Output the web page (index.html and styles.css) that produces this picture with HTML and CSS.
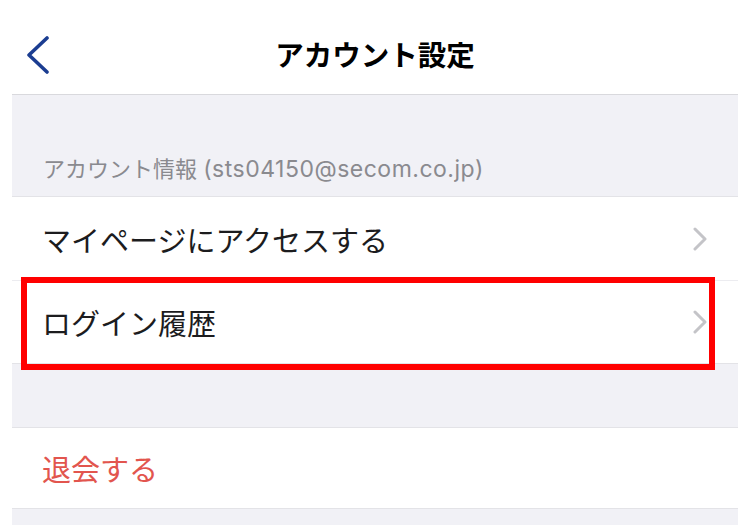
FILE: index.html
```html
<!DOCTYPE html>
<html lang="ja">
<head>
    <meta charset="UTF-8">
    <meta name="viewport" content="width=device-width, initial-scale=1.0">
    <title>アカウント設定</title>
    <link rel="stylesheet" href="styles.css">
</head>
<body>
    <div class="screen">
        <header class="nav">
            <button class="back-button" aria-label="戻る">
                <svg width="26" height="38" viewBox="0 0 26 38">
                    <polyline points="22,2 4,19 22,36" fill="none" stroke="#1b3d91" stroke-width="3.6" stroke-linecap="round" stroke-linejoin="round"/>
                </svg>
            </button>
            <h1 class="nav-title">アカウント設定</h1>
            <span></span>
        </header>

        <div class="section-header">アカウント情報 <span class="email">(sts04150@secom.co.jp)</span></div>
        <ul class="group">
            <li class="row">
                <span>マイページにアクセスする</span>
                <svg class="chevron" width="16" height="24" viewBox="0 0 16 24">
                    <polyline points="3,2 13,12 3,22" fill="none" stroke="#c4c4c8" stroke-width="3" stroke-linecap="round" stroke-linejoin="round"/>
                </svg>
            </li>
            <li class="row highlighted">
                <span>ログイン履歴</span>
                <svg class="chevron" width="16" height="24" viewBox="0 0 16 24">
                    <polyline points="3,2 13,12 3,22" fill="none" stroke="#c4c4c8" stroke-width="3" stroke-linecap="round" stroke-linejoin="round"/>
                </svg>
            </li>
        </ul>

        <div class="section-spacer"></div>
        <ul class="group">
            <li class="row danger">
                <span>退会する</span>
            </li>
        </ul>
    </div>
</body>
</html>
```

FILE: styles.css
```css
body {
    margin: 0;
    background-color: #fff;
    font-family: "Noto Sans CJK JP", "Noto Sans", sans-serif;
    color: #1c1c1e;
}
.screen {
    margin-left: 12px;
    width: 726px;
    height: 525px;
    background-color: #f1f1f6;
    overflow: hidden;
}
.nav {
    display: grid;
    grid-template-columns: 1fr auto 1fr;
    align-items: center;
    height: 80px;
    padding-top: 14px;
    background-color: #fff;
    border-bottom: 1px solid #d9d9dd;
}
.back-button {
    justify-self: start;
    display: flex;
    margin-left: 13px;
    margin-top: 2px;
    padding: 0;
    border: none;
    background: none;
}
.nav-title {
    margin: -2px 0 0;
    font-size: 28.5px;
    font-weight: 700;
    color: #000;
}
.section-header {
    padding: 59px 0 12px 31px;
    font-family: Inter, "Noto Sans CJK JP", sans-serif;
    font-size: 22px;
    line-height: 30px;
    color: #8a8a8f;
    border-bottom: 1px solid #e3e3e7;
}
.section-header .email {
    font-size: 23px;
    letter-spacing: 0.5px;
}
.group {
    list-style: none;
    margin: 0;
    padding: 0;
    background-color: #fff;
    border-bottom: 1px solid #e3e3e7;
}
.row {
    position: relative;
    display: flex;
    align-items: center;
    justify-content: space-between;
    height: 83px;
    padding: 0 30px 0 30px;
    font-size: 29px;
}
.row + .row {
    height: 82px;
    border-top: 1px solid #ececf0;
}
.row .chevron {
    flex-shrink: 0;
}
.row.danger {
    height: 80px;
    color: #e2554e;
}
.highlighted::after {
    content: "";
    position: absolute;
    left: 9px;
    right: 23px;
    top: -4px;
    bottom: -7px;
    border: 6px solid #ff0000;
}
.section-spacer {
    height: 63px;
    border-bottom: 1px solid #e3e3e7;
}
```
